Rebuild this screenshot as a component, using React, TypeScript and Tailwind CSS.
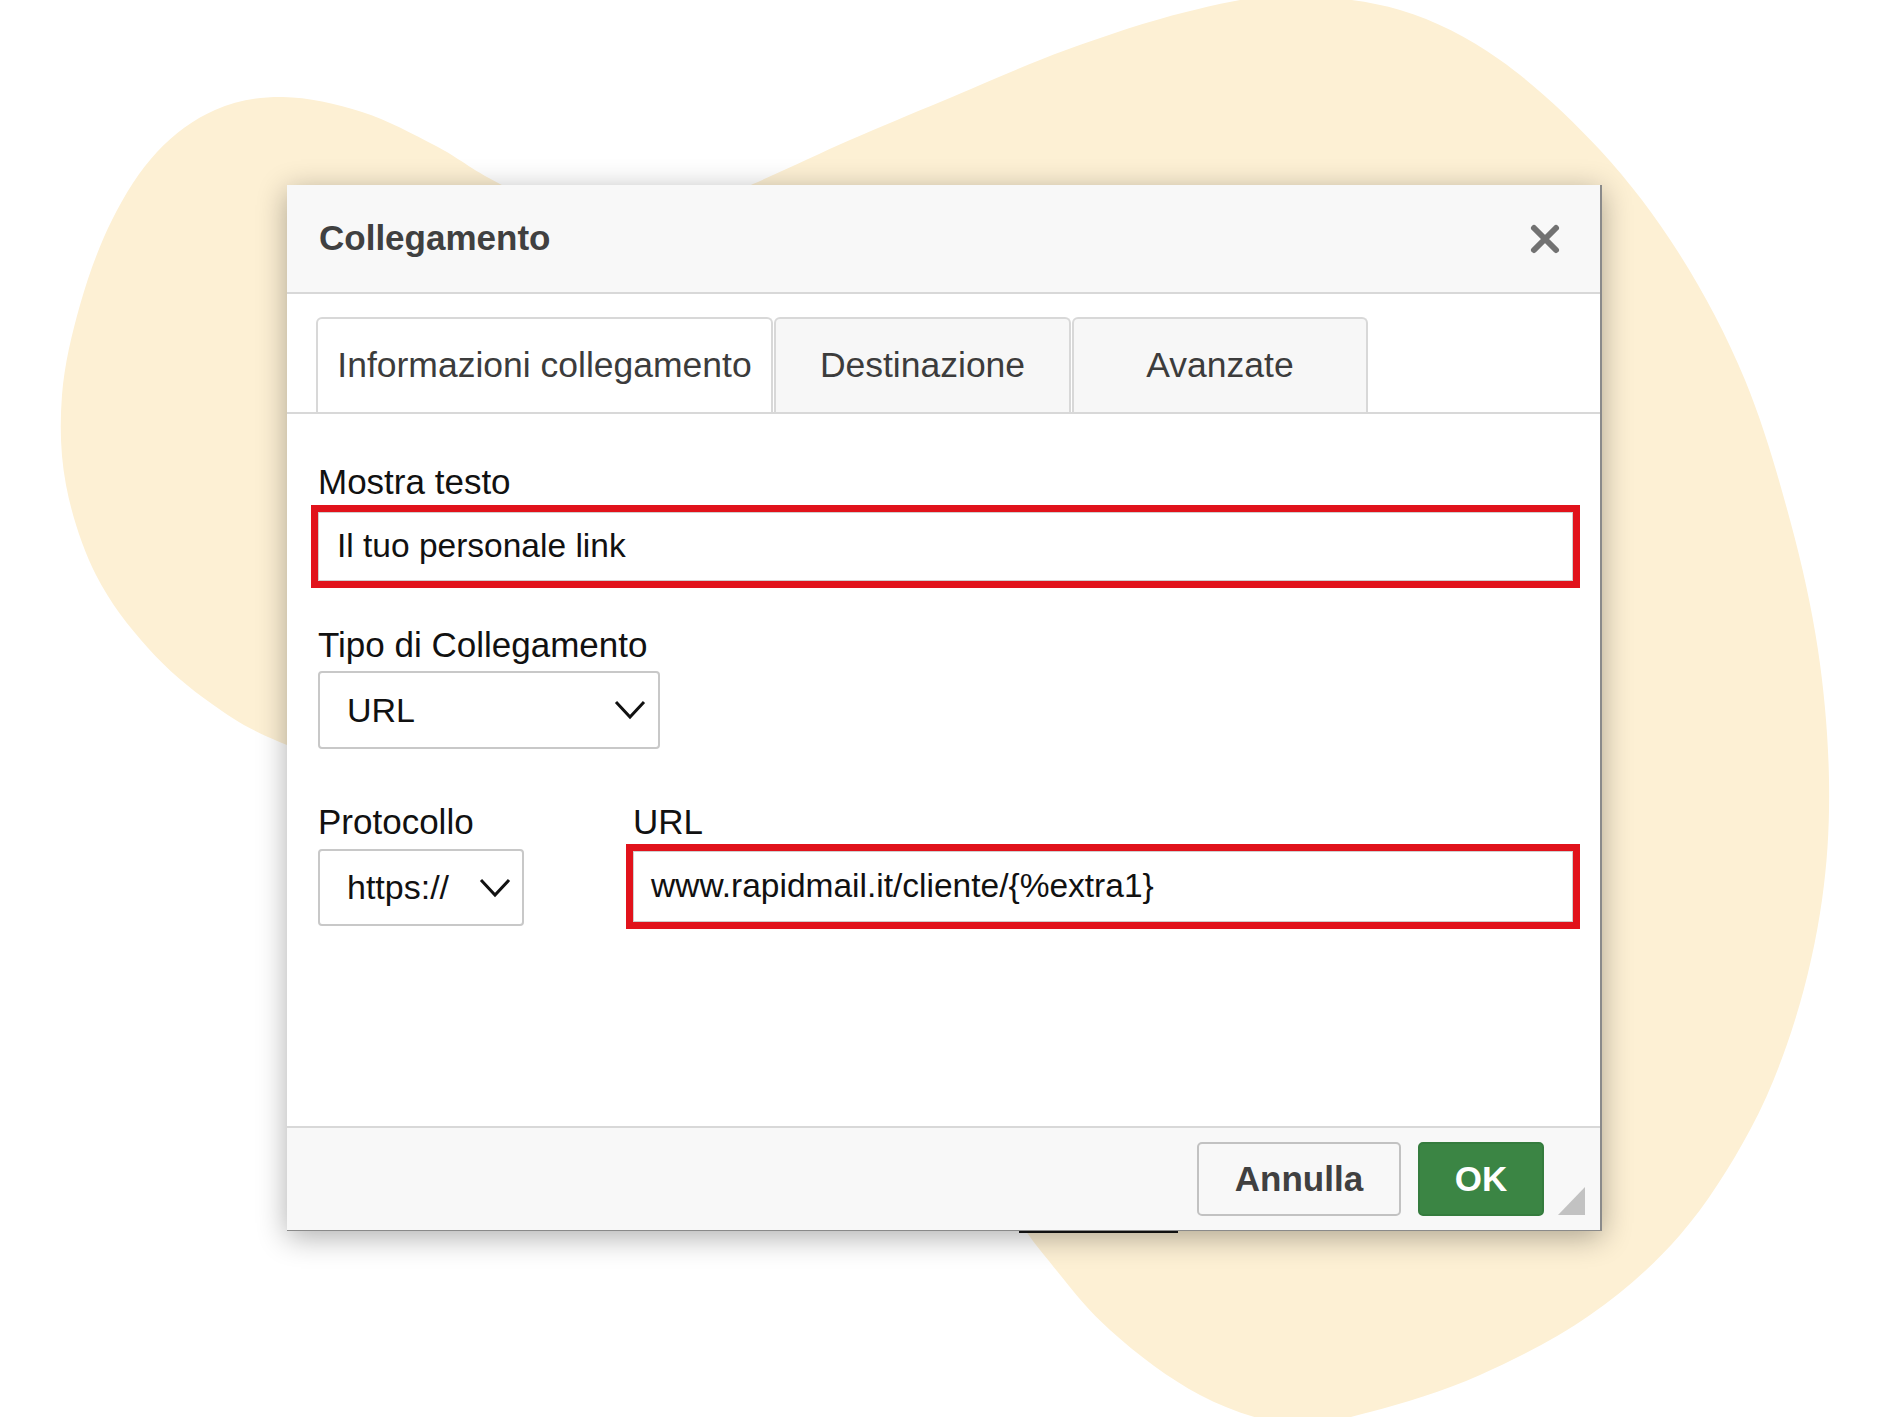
import React from 'react'

// outline of the yellow blob behind the dialog (page coords)
const blobPoints: [number, number][] = [
  [500, 184], [436, 146], [362, 112], [283, 97], [215, 110], [157, 152], [112, 220],
  [80, 305], [62, 395], [66, 485], [96, 575], [148, 648], [212, 704], [287, 745],
  [450, 800], [700, 950], [930, 1110], [1040, 1250], [1110, 1330], [1200, 1395],
  [1290, 1424], [1370, 1412], [1480, 1375], [1590, 1315], [1680, 1235], [1750, 1130],
  [1795, 1020], [1822, 900], [1829, 780], [1818, 650], [1790, 520], [1745, 380],
  [1680, 255], [1600, 150], [1500, 60], [1400, 10], [1285, -4], [1186, 12],
  [1066, 50], [945, 100], [850, 140], [753, 184], [620, 240],
]

// closed catmull-rom -> cubic bezier
function smoothPath(pts: [number, number][]) {
  const n = pts.length
  let d = `M${pts[0][0]},${pts[0][1]}`
  for (let i = 0; i < n; i++) {
    const p0 = pts[(i - 1 + n) % n]
    const p1 = pts[i]
    const p2 = pts[(i + 1) % n]
    const p3 = pts[(i + 2) % n]
    const c1x = p1[0] + (p2[0] - p0[0]) / 6
    const c1y = p1[1] + (p2[1] - p0[1]) / 6
    const c2x = p2[0] - (p3[0] - p1[0]) / 6
    const c2y = p2[1] - (p3[1] - p1[1]) / 6
    d += ` C${c1x.toFixed(1)},${c1y.toFixed(1)} ${c2x.toFixed(1)},${c2y.toFixed(1)} ${p2[0]},${p2[1]}`
  }
  return d + ' Z'
}

function Chevron() {
  return (
    <svg width="32" height="20" viewBox="0 0 32 20" fill="none">
      <polyline points="2,2 16,17 30,2" stroke="#111" strokeWidth="3" strokeLinejoin="miter" />
    </svg>
  )
}

function Label({ children }: { children: React.ReactNode }) {
  return <div className="text-[35px] leading-[40px] text-[#111]">{children}</div>
}

export default function App() {
  return (
    <div
      className="relative w-[1890px] h-[1417px] overflow-hidden bg-white"
      style={{ fontFamily: '"Liberation Sans", Arial, Helvetica, sans-serif' }}
    >
      <svg className="absolute inset-0" width="1890" height="1417" viewBox="0 0 1890 1417">
        <path d={smoothPath(blobPoints)} fill="#fdf0d4" />
      </svg>

      <div className="relative pt-[185px] pl-[287px]">
        <div className="w-[1315px] bg-white border-r-2 border-b border-[#8a8a8a] shadow-[0_6px_28px_rgba(0,0,0,0.32)]">
          {/* header */}
          <div className="h-[109px] bg-[#f8f8f8] border-b-2 border-[#d8d8d8] flex items-center justify-between pl-[32px] pr-[39px]">
            <h1 className="text-[35px] font-bold text-[#404040]">Collegamento</h1>
            <svg width="32" height="32" viewBox="0 0 32 32">
              <path d="M5 5 L27 27 M27 5 L5 27" stroke="#727272" strokeWidth="6" strokeLinecap="round" />
            </svg>
          </div>

          {/* tabs */}
          <div className="pt-[23px] pl-[29px] flex gap-[1px] border-b-2 border-[#d8d8d8]">
            <div className="w-[457px] h-[95px] -mb-[2px] bg-white border-2 border-b-0 border-[#d8d8d8] rounded-t-[6px] flex items-center justify-center text-[35.5px] text-[#3c3c3c]">
              Informazioni collegamento
            </div>
            <div className="w-[297px] h-[95px] bg-[#f7f7f7] border-2 border-b-0 border-[#d8d8d8] rounded-t-[6px] flex items-center justify-center text-[35.5px] text-[#3c3c3c]">
              Destinazione
            </div>
            <div className="w-[296px] h-[95px] bg-[#f7f7f7] border-2 border-b-0 border-[#d8d8d8] rounded-t-[6px] flex items-center justify-center text-[35.5px] text-[#3c3c3c]">
              Avanzate
            </div>
          </div>

          {/* body */}
          <div className="h-[712px] pt-[48px] pl-[31px] pr-[27px]">
            <Label>Mostra testo</Label>
            <div className="mt-[10px] h-[69px] border border-[#cfcfcf] outline-solid outline-[7px] outline-[#e1121b] flex items-center pl-[18px] text-[33.5px] text-[#111]">
              Il tuo personale link
            </div>

            <div className="mt-[44px]">
              <Label>Tipo di Collegamento</Label>
            </div>
            <div className="mt-[6px] w-[342px] h-[78px] border-2 border-[#c8c8c8] rounded-[4px] flex items-center justify-between pl-[27px] pr-[12px] text-[34px] text-[#111]">
              <span>URL</span>
              <Chevron />
            </div>

            <div className="mt-[53px] flex">
              <div className="w-[206px]">
                <Label>Protocollo</Label>
                <div className="mt-[7px] h-[77px] border-2 border-[#c8c8c8] rounded-[4px] flex items-center justify-between pl-[27px] pr-[11px] text-[34px] text-[#111]">
                  <span>https://</span>
                  <Chevron />
                </div>
              </div>
              <div className="ml-[109px] flex-1">
                <Label>URL</Label>
                <div className="mt-[9px] h-[71px] border border-[#cfcfcf] outline-solid outline-[7px] outline-[#e1121b] flex items-center pl-[17px] text-[33.5px] text-[#111]">
                  {'www.rapidmail.it/cliente/{%extra1}'}
                </div>
              </div>
            </div>
          </div>

          {/* footer */}
          <div className="relative h-[104px] bg-[#f8f8f8] border-t-2 border-[#d8d8d8] flex items-center justify-end gap-[17px] pr-[56px]">
            <button className="w-[204px] h-[74px] bg-[#f8f8f8] border-2 border-[#c2c2c2] rounded-[5px] text-[35px] font-bold text-[#404040]">
              Annulla
            </button>
            <button className="w-[126px] h-[74px] bg-[#3b8544] border-2 border-[#357c3e] rounded-[5px] text-[35px] font-bold text-white">
              OK
            </button>
            <svg className="absolute right-[15px] bottom-[15px]" width="27" height="28" viewBox="0 0 27 28">
              <polygon points="27,0 27,28 0,28" fill="#c2c2c2" />
            </svg>
          </div>
        </div>
        <div className="ml-[732px] w-[159px] h-[2px] bg-[#111]" />
      </div>
    </div>
  )
}
